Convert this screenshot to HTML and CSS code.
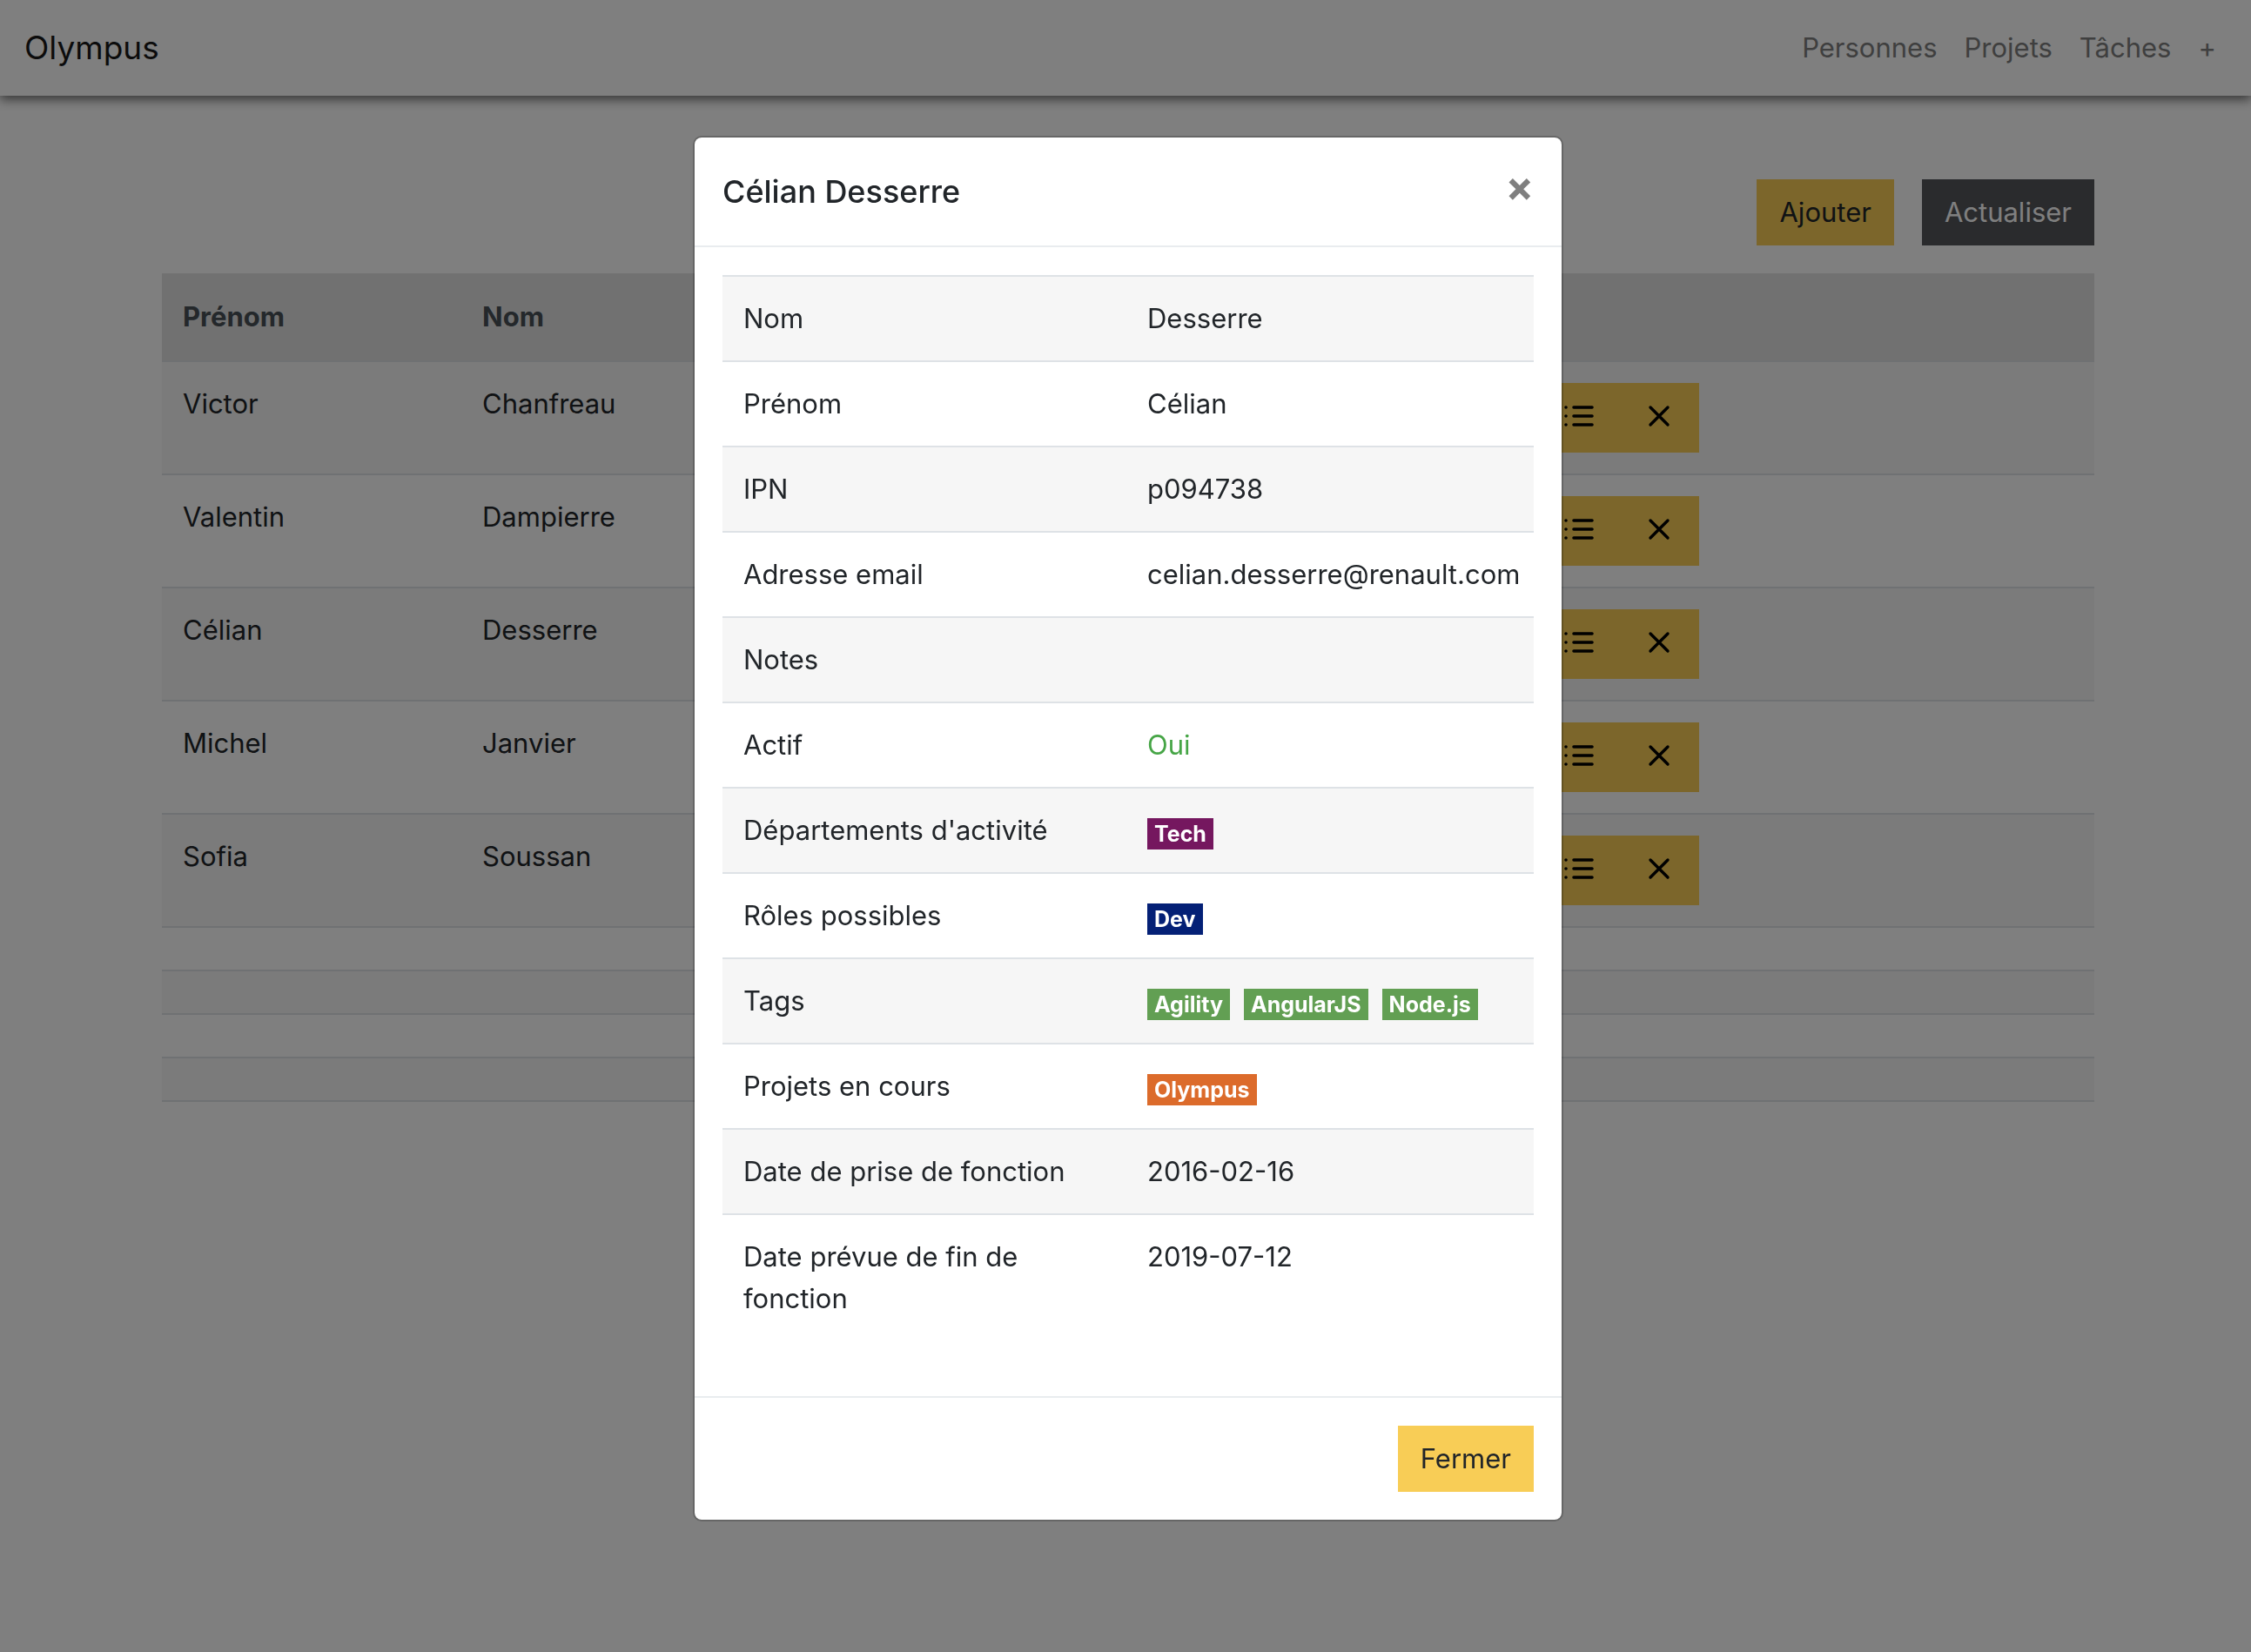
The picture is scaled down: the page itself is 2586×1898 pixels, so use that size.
FILE: index.html
```html
<!DOCTYPE html>
<html lang="fr">
<head>
<meta charset="utf-8">
<title>Olympus</title>
<link rel="stylesheet" href="styles.css">
</head>
<body>
<svg class="sprite" aria-hidden="true">
  <symbol id="icon-list" viewBox="0 0 40 40">
    <path stroke-width="3.6" d="M14 10H35M14 20H35M14 30H35M5 10H5M5 20H5M5 30H5"/>
  </symbol>
  <symbol id="icon-cross" viewBox="0 0 40 40">
    <path stroke-width="3.4" d="M10 10L30 30M30 10L10 30"/>
  </symbol>
</svg>

<header class="navbar">
  <a class="brand" href="#">Olympus</a>
  <nav class="nav">
    <a class="nav-link" href="#">Personnes</a>
    <a class="nav-link" href="#">Projets</a>
    <a class="nav-link" href="#">Tâches</a>
    <a class="nav-link" href="#">+</a>
  </nav>
</header>

<main class="container">
  <div class="toolbar">
    <button class="btn btn-primary" type="button">Ajouter</button>
    <button class="btn btn-dark" type="button">Actualiser</button>
  </div>
  <table class="table people">
    <thead>
      <tr><th class="col-first" scope="col">Prénom</th><th scope="col">Nom</th><th class="col-actions"></th></tr>
    </thead>
    <tbody>
      <tr><td>Victor</td><td>Chanfreau</td><td><div class="actions"><button class="icon-btn" type="button" aria-label="Détails"><svg class="icon"><use href="#icon-list"/></svg></button><button class="icon-btn" type="button" aria-label="Supprimer"><svg class="icon"><use href="#icon-cross"/></svg></button></div></td></tr>
      <tr><td>Valentin</td><td>Dampierre</td><td><div class="actions"><button class="icon-btn" type="button" aria-label="Détails"><svg class="icon"><use href="#icon-list"/></svg></button><button class="icon-btn" type="button" aria-label="Supprimer"><svg class="icon"><use href="#icon-cross"/></svg></button></div></td></tr>
      <tr><td>Célian</td><td>Desserre</td><td><div class="actions"><button class="icon-btn" type="button" aria-label="Détails"><svg class="icon"><use href="#icon-list"/></svg></button><button class="icon-btn" type="button" aria-label="Supprimer"><svg class="icon"><use href="#icon-cross"/></svg></button></div></td></tr>
      <tr><td>Michel</td><td>Janvier</td><td><div class="actions"><button class="icon-btn" type="button" aria-label="Détails"><svg class="icon"><use href="#icon-list"/></svg></button><button class="icon-btn" type="button" aria-label="Supprimer"><svg class="icon"><use href="#icon-cross"/></svg></button></div></td></tr>
      <tr><td>Sofia</td><td>Soussan</td><td><div class="actions"><button class="icon-btn" type="button" aria-label="Détails"><svg class="icon"><use href="#icon-list"/></svg></button><button class="icon-btn" type="button" aria-label="Supprimer"><svg class="icon"><use href="#icon-cross"/></svg></button></div></td></tr>
      <tr><td></td><td></td><td></td></tr>
      <tr><td></td><td></td><td></td></tr>
      <tr><td></td><td></td><td></td></tr>
      <tr class="last"><td></td><td></td><td></td></tr>
    </tbody>
  </table>
</main>

<div class="overlay">
  <section class="modal" role="dialog" aria-modal="true" aria-labelledby="modal-title">
    <header class="modal-header">
      <h5 class="modal-title" id="modal-title">Célian Desserre</h5>
      <button class="close" type="button" aria-label="Fermer la fenêtre">×</button>
    </header>
    <div class="modal-body">
      <table class="table details">
        <tbody>
          <tr><td class="col-label">Nom</td><td>Desserre</td></tr>
          <tr><td>Prénom</td><td>Célian</td></tr>
          <tr><td>IPN</td><td>p094738</td></tr>
          <tr><td>Adresse email</td><td>celian.desserre@renault.com</td></tr>
          <tr><td>Notes</td><td></td></tr>
          <tr><td>Actif</td><td class="yes">Oui</td></tr>
          <tr><td>Départements d'activité</td><td><div class="badges"><span class="badge badge-purple">Tech</span></div></td></tr>
          <tr><td>Rôles possibles</td><td><div class="badges"><span class="badge badge-navy">Dev</span></div></td></tr>
          <tr><td>Tags</td><td><div class="badges"><span class="badge badge-green">Agility</span><span class="badge badge-green">AngularJS</span><span class="badge badge-green">Node.js</span></div></td></tr>
          <tr><td>Projets en cours</td><td><div class="badges"><span class="badge badge-orange">Olympus</span></div></td></tr>
          <tr><td>Date de prise de fonction</td><td>2016-02-16</td></tr>
          <tr><td>Date prévue de fin de fonction</td><td>2019-07-12</td></tr>
        </tbody>
      </table>
    </div>
    <footer class="modal-footer">
      <button class="btn btn-primary" type="button">Fermer</button>
    </footer>
  </section>
</div>
</body>
</html>
```

FILE: styles.css
```css
* {
  box-sizing: border-box;
}

body {
  margin: 0;
  background: #fff;
  color: #212529;
  font-family: Inter, "Liberation Sans", sans-serif;
  font-size: 31px;
  line-height: 48px;
}

.sprite {
  display: none;
}

.navbar {
  display: flex;
  align-items: center;
  justify-content: space-between;
  height: 110px;
  padding: 0 40px 0 28px;
  background: #fff;
  box-shadow: 0 4px 12px rgba(0, 0, 0, 0.6);
}

.brand {
  color: #191919;
  font-size: 37px;
  text-decoration: none;
}

.nav {
  display: flex;
  gap: 31px;
}

.nav-link {
  color: #7f7f7f;
  text-decoration: none;
}

.container {
  max-width: 2286px;
  margin: 0 auto;
  padding: 96px 30px 0 36px;
}

.toolbar {
  display: flex;
  justify-content: flex-end;
  gap: 32px;
  margin-bottom: 32px;
}

.btn {
  height: 76px;
  padding: 0 26px;
  border: 0;
  font: inherit;
}

.btn-primary {
  background: #f8cd56;
  color: #212529;
}

.btn-dark {
  background: #54565a;
  color: #fff;
}

.table {
  width: 100%;
  border-collapse: separate;
  border-spacing: 0;
  table-layout: fixed;
}

.table th,
.table td {
  padding: 24px;
  border-top: 2px solid #dee2e6;
  text-align: left;
  vertical-align: top;
}

.details td {
  padding-right: 16px;
}

.table td:empty {
  height: 50px;
}

.table tbody tr:nth-child(odd) {
  background: #f6f6f6;
}

.table th {
  height: 100px;
  border-color: #e2e2e2;
  background: #e2e2e2;
  color: #495057;
  font-weight: 700;
}

.last td {
  border-bottom: 2px solid #dee2e6;
}

.col-first {
  width: 344px;
}

.col-actions {
  width: 662px;
}

.actions {
  display: flex;
}

.icon-btn {
  width: 92px;
  height: 80px;
  padding: 0 0 4px;
  border: 0;
  background: #f8cd56;
  line-height: 0;
}

.icon {
  width: 40px;
  height: 40px;
  fill: none;
  stroke: #000;
  stroke-linecap: round;
}

.overlay {
  position: fixed;
  inset: 0;
  padding: 156px 0 0 6px;
  overflow: auto;
  background: rgba(0, 0, 0, 0.5);
}

.modal {
  max-width: 1000px;
  margin: 0 auto;
  border: 2px solid rgba(0, 0, 0, 0.2);
  border-radius: 10px;
  background: #fff;
  background-clip: padding-box;
}

.modal-header {
  display: flex;
  align-items: flex-start;
  justify-content: space-between;
  padding: 32px;
  border-bottom: 2px solid #e9ecef;
}

.modal-title {
  margin: 0;
  font-size: 36px;
  font-weight: 500;
  line-height: 60px;
}

.close {
  padding: 0;
  border: 0;
  background: none;
  color: #7f7f7f;
  font: inherit;
  font-size: 48px;
  font-weight: 700;
  line-height: 48px;
}

.modal-body {
  padding: 32px 32px 64px;
}

.col-label {
  width: 464px;
}

.yes {
  color: #46a546;
}

.badges {
  display: flex;
  gap: 16px;
  padding: 10px 0 2px;
}

.badge {
  padding: 6px 8px;
  color: #fff;
  font-size: 25px;
  font-weight: 700;
  line-height: 24px;
}

.badge-purple {
  background: #75175f;
}

.badge-navy {
  background: #042076;
}

.badge-green {
  background: #629f53;
}

.badge-orange {
  background: #dc6b2b;
}

.modal-footer {
  display: flex;
  justify-content: flex-end;
  padding: 32px;
  border-top: 2px solid #e9ecef;
}
```
